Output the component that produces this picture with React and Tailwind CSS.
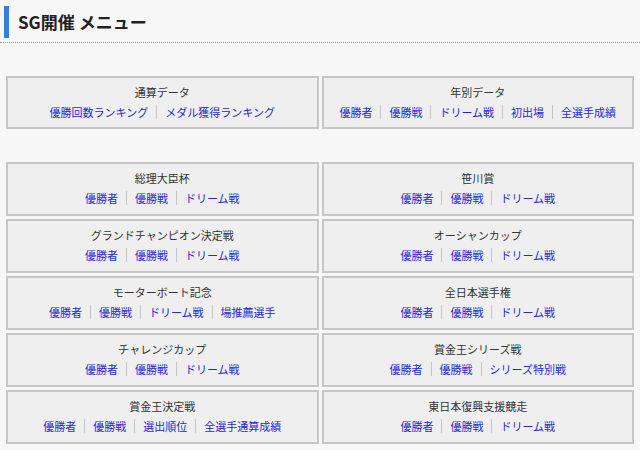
import React from "react";

const topMenus = [
  { title: "通算データ", links: ["優勝回数ランキング", "メダル獲得ランキング"] },
  { title: "年別データ", links: ["優勝者", "優勝戦", "ドリーム戦", "初出場", "全選手成績"] },
];

const sgMenus = [
  { title: "総理大臣杯", links: ["優勝者", "優勝戦", "ドリーム戦"] },
  { title: "笹川賞", links: ["優勝者", "優勝戦", "ドリーム戦"] },
  { title: "グランドチャンピオン決定戦", links: ["優勝者", "優勝戦", "ドリーム戦"] },
  { title: "オーシャンカップ", links: ["優勝者", "優勝戦", "ドリーム戦"] },
  { title: "モーターボート記念", links: ["優勝者", "優勝戦", "ドリーム戦", "場推薦選手"] },
  { title: "全日本選手権", links: ["優勝者", "優勝戦", "ドリーム戦"] },
  { title: "チャレンジカップ", links: ["優勝者", "優勝戦", "ドリーム戦"] },
  { title: "賞金王シリーズ戦", links: ["優勝者", "優勝戦", "シリーズ特別戦"] },
  { title: "賞金王決定戦", links: ["優勝者", "優勝戦", "選出順位", "全選手通算成績"] },
  { title: "東日本復興支援競走", links: ["優勝者", "優勝戦", "ドリーム戦"] },
];

function MenuBox({ title, links, tall }) {
  return (
    <div
      className={
        tall
          ? "flex h-[54px] flex-col items-center justify-center border-2 border-[#c6c6c6] bg-[#efefef] pb-[2px]"
          : "flex h-[53px] flex-col items-center justify-center border-2 border-[#c6c6c6] bg-[#efefef] pb-[2px]"
      }
    >
      <p className="text-[11px] leading-[18px] text-[#333]">{title}</p>
      <div className="mt-[2px] flex items-center">
        {links.map((link, i) => (
          <React.Fragment key={link}>
            {i > 0 ? <span className="mx-[8px] h-[14px] w-px bg-[#c4c4c4]" /> : null}
            <a href="#" className="text-[11px] leading-[18px] text-[#2626e0]">
              {link}
            </a>
          </React.Fragment>
        ))}
      </div>
    </div>
  );
}

export default function App() {
  return (
    <div
      className="min-h-[450px] bg-[#f7f7f7] pt-[6px]"
      style={{ fontFamily: '"Noto Sans CJK JP", "Noto Sans", sans-serif' }}
    >
      <div className="border-b border-dotted border-[#9a9a9a] pb-[4px] pl-[4px]">
        <h1 className="flex h-[32px] items-center border-l-[5px] border-[#3a7de0] pl-[9px] text-[17px] font-bold text-[#222]">
          SG開催 メニュー
        </h1>
      </div>

      <div className="mt-[33px] grid grid-cols-2 gap-[3px] px-[6px]">
        {topMenus.map((m) => (
          <MenuBox key={m.title} {...m} />
        ))}
      </div>

      <div className="mt-[33px] grid grid-cols-2 gap-[3px] px-[6px]">
        {sgMenus.map((m) => (
          <MenuBox key={m.title} tall {...m} />
        ))}
      </div>
    </div>
  );
}
